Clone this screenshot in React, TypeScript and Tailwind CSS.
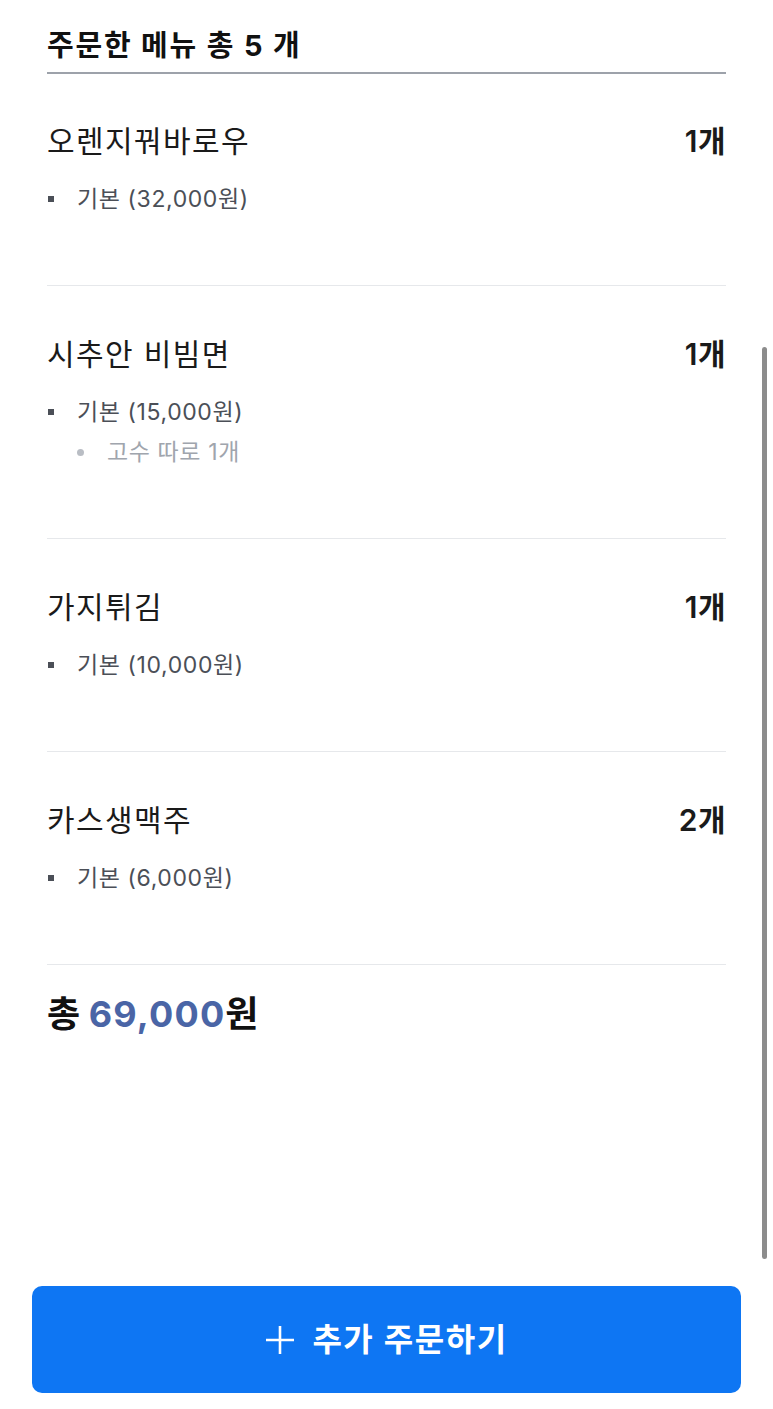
import React from "react";

interface IOrderOption {
  label: string;
  subs?: string[];
}

interface IOrderItem {
  name: string;
  qty: number;
  options: IOrderOption[];
}

const orderItems: IOrderItem[] = [
  { name: "오렌지꿔바로우", qty: 1, options: [{ label: "기본 (32,000원)" }] },
  {
    name: "시추안 비빔면",
    qty: 1,
    options: [{ label: "기본 (15,000원)", subs: ["고수 따로 1개"] }],
  },
  { name: "가지튀김", qty: 1, options: [{ label: "기본 (10,000원)" }] },
  { name: "카스생맥주", qty: 2, options: [{ label: "기본 (6,000원)" }] },
];

const FONT = "font-['Inter','Noto_Sans_CJK_KR',sans-serif]";

const OrderRow: React.FC<{ item: IOrderItem; first?: boolean }> = ({ item, first }) => {
  return (
    <div className={`${first ? "pt-[47px]" : "pt-[48px] border-t border-[#e6e8eb]"} pb-[66px]`}>
      <div className="flex items-center justify-between h-[40px]">
        <span className="text-[30px] leading-[40px] text-[#1a1a1a] tracking-[1.4px]">{item.name}</span>
        <span className="text-[30px] leading-[40px] font-semibold text-[#1a1a1a] tracking-[0.5px]">
          {item.qty}개
        </span>
      </div>
      <ul className="mt-[18px]">
        {item.options.map((opt) => (
          <li key={opt.label}>
            <div className="flex items-center h-[40px]">
              <span className="w-[6px] h-[6px] bg-[#4b4f57] ml-[1px] mr-[23px]" />
              <span className="text-[23px] leading-[40px] text-[#4b4f57] tracking-[0.6px]">{opt.label}</span>
            </div>
            {opt.subs?.map((s) => (
              <div key={s} className="flex items-center h-[40px] pl-[30px]">
                <span className="w-[7px] h-[7px] rounded-full bg-[#b9bdc4] mr-[23px]" />
                <span className="text-[23px] leading-[40px] text-[#a0a5ad] tracking-[0.6px]">{s}</span>
              </div>
            ))}
          </li>
        ))}
      </ul>
    </div>
  );
};

const App: React.FC = () => {
  return (
    <div className={`relative h-[1409px] bg-white flex flex-col overflow-hidden ${FONT}`}>
      <div className="flex-1 px-[47px]">
        <div className="pt-[26px] pb-[6px] border-b-2 border-[#9da2aa]">
          <h2 className="text-[29px] leading-[40px] font-bold text-[#111] tracking-[1.8px]">
            주문한 메뉴 총 5 개
          </h2>
        </div>
        {orderItems.map((item, i) => (
          <OrderRow key={item.name} item={item} first={i === 0} />
        ))}
        <div className="border-t border-[#e6e8eb] pt-[27px]">
          <p className="text-[36px] leading-[44px] font-bold text-[#111]">
            총 <span className="text-[#4a65a6] tracking-[1.2px]">69,000</span>원
          </p>
        </div>
      </div>

      <div className="px-[32px] pb-[16px]">
        <button className="w-full h-[107px] rounded-[10px] bg-[#0e76f3] flex items-center justify-center gap-[17px] text-white">
          <svg width="30" height="30" viewBox="0 0 30 30" fill="none">
            <path d="M15 1v28M1 15h28" stroke="white" strokeWidth="2.6" />
          </svg>
          <span className="text-[32px] font-semibold tracking-[1.5px]">추가 주문하기</span>
        </button>
      </div>

      {/* overlay scrollbar */}
      <div className="absolute right-[6px] top-[347px] w-[5px] h-[912px] rounded-full bg-[#8c8c8c]" />
    </div>
  );
};

export default App;
